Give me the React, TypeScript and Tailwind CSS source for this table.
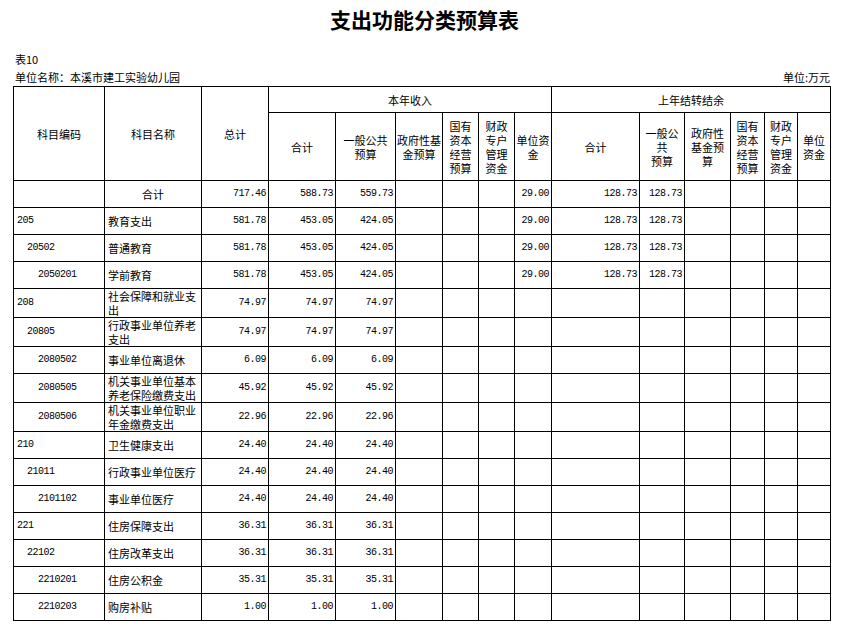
import React from "react"

type Row = { code: string; level: number; name: string; vals: string[]; h: number }

const widths = [91, 97, 67, 67, 60, 47, 36, 36, 37, 88, 45, 46, 34, 33, 33]

const full = (a: string, b: string, c: string) => [a, b, c, "", "", "", "29.00", "128.73", "128.73", "", "", "", "", ""]
const three = (v: string) => [v, v, v, "", "", "", "", "", "", "", "", "", "", ""]

const rows: Row[] = [
    { code: "", level: 0, name: "合计", vals: full("717.46", "588.73", "559.73"), h: 27 },
    { code: "205", level: 1, name: "教育支出", vals: full("581.78", "453.05", "424.05"), h: 27 },
    { code: "20502", level: 2, name: "普通教育", vals: full("581.78", "453.05", "424.05"), h: 27 },
    { code: "2050201", level: 3, name: "学前教育", vals: full("581.78", "453.05", "424.05"), h: 27 },
    { code: "208", level: 1, name: "社会保障和就业支出", vals: three("74.97"), h: 28 },
    { code: "20805", level: 2, name: "行政事业单位养老支出", vals: three("74.97"), h: 29 },
    { code: "2080502", level: 3, name: "事业单位离退休", vals: three("6.09"), h: 27 },
    { code: "2080505", level: 3, name: "机关事业单位基本养老保险缴费支出", vals: three("45.92"), h: 29 },
    { code: "2080506", level: 3, name: "机关事业单位职业年金缴费支出", vals: three("22.96"), h: 28 },
    { code: "210", level: 1, name: "卫生健康支出", vals: three("24.40"), h: 27 },
    { code: "21011", level: 2, name: "行政事业单位医疗", vals: three("24.40"), h: 27 },
    { code: "2101102", level: 3, name: "事业单位医疗", vals: three("24.40"), h: 27 },
    { code: "221", level: 1, name: "住房保障支出", vals: three("36.31"), h: 27 },
    { code: "22102", level: 2, name: "住房改革支出", vals: three("36.31"), h: 27 },
    { code: "2210201", level: 3, name: "住房公积金", vals: three("35.31"), h: 27 },
    { code: "2210203", level: 3, name: "购房补贴", vals: three("1.00"), h: 27 },
]

const indent = ["", "pl-[3px]", "pl-[13px]", "pl-[24px]"]

const td = "border border-black p-0"
const num = "font-['Liberation_Mono',monospace] text-[10px] tracking-[-0.5px]"

const Head = ({ lines, rowSpan }: { lines: string[]; rowSpan?: number }) => (
    <th rowSpan={rowSpan} className={`${td} font-normal text-center align-middle leading-[14px]`}>
        {lines.map((l, i) => (
            <div key={i}>{l}</div>
        ))}
    </th>
)

export default function App() {
    return (
        <div className="w-[847px] h-[640px] bg-white text-black font-['Noto_Sans_CJK_SC',sans-serif] overflow-hidden">
            <h1 className="pt-[5px] h-[50px] text-center text-[21px] font-bold leading-[28px] pl-[2px]">支出功能分类预算表</h1>
            <div className="px-[15px] text-[11px] leading-[18px]">
                <div>表10</div>
                <div className="flex justify-between pr-[2px]">
                    <span>单位名称：本溪市建工实验幼儿园</span>
                    <span>单位:万元</span>
                </div>
            </div>
            <table className="ml-[13px] table-fixed border-collapse text-[11px] leading-[14px]" style={{ width: 817 }}>
                <colgroup>
                    {widths.map((w, i) => (
                        <col key={i} style={{ width: w }} />
                    ))}
                </colgroup>
                <thead>
                    <tr className="h-[26px]">
                        <Head rowSpan={2} lines={["科目编码"]} />
                        <Head rowSpan={2} lines={["科目名称"]} />
                        <Head rowSpan={2} lines={["总计"]} />
                        <th colSpan={6} className={`${td} font-normal text-center`}>本年收入</th>
                        <th colSpan={6} className={`${td} font-normal text-center`}>上年结转结余</th>
                    </tr>
                    <tr className="h-[68px]">
                        <Head lines={["合计"]} />
                        <Head lines={["一般公共", "预算"]} />
                        <Head lines={["政府性基", "金预算"]} />
                        <Head lines={["国有", "资本", "经营", "预算"]} />
                        <Head lines={["财政", "专户", "管理", "资金"]} />
                        <Head lines={["单位资", "金"]} />
                        <Head lines={["合计"]} />
                        <Head lines={["一般公", "共", "预算"]} />
                        <Head lines={["政府性", "基金预", "算"]} />
                        <Head lines={["国有", "资本", "经营", "预算"]} />
                        <Head lines={["财政", "专户", "管理", "资金"]} />
                        <Head lines={["单位", "资金"]} />
                    </tr>
                </thead>
                <tbody>
                    {rows.map((r, i) => (
                        <tr key={i} style={{ height: r.h }}>
                            <td className={`${td} ${indent[r.level]} ${num}`}>{r.code}</td>
                            <td className={`${td} ${r.level === 0 ? "text-center" : "pl-[3px] pr-[4px]"}`}>{r.name}</td>
                            {r.vals.map((v, j) => (
                                <td key={j} className={`${td} pr-[2px] text-right ${num}`}>{v}</td>
                            ))}
                        </tr>
                    ))}
                </tbody>
            </table>
        </div>
    )
}
